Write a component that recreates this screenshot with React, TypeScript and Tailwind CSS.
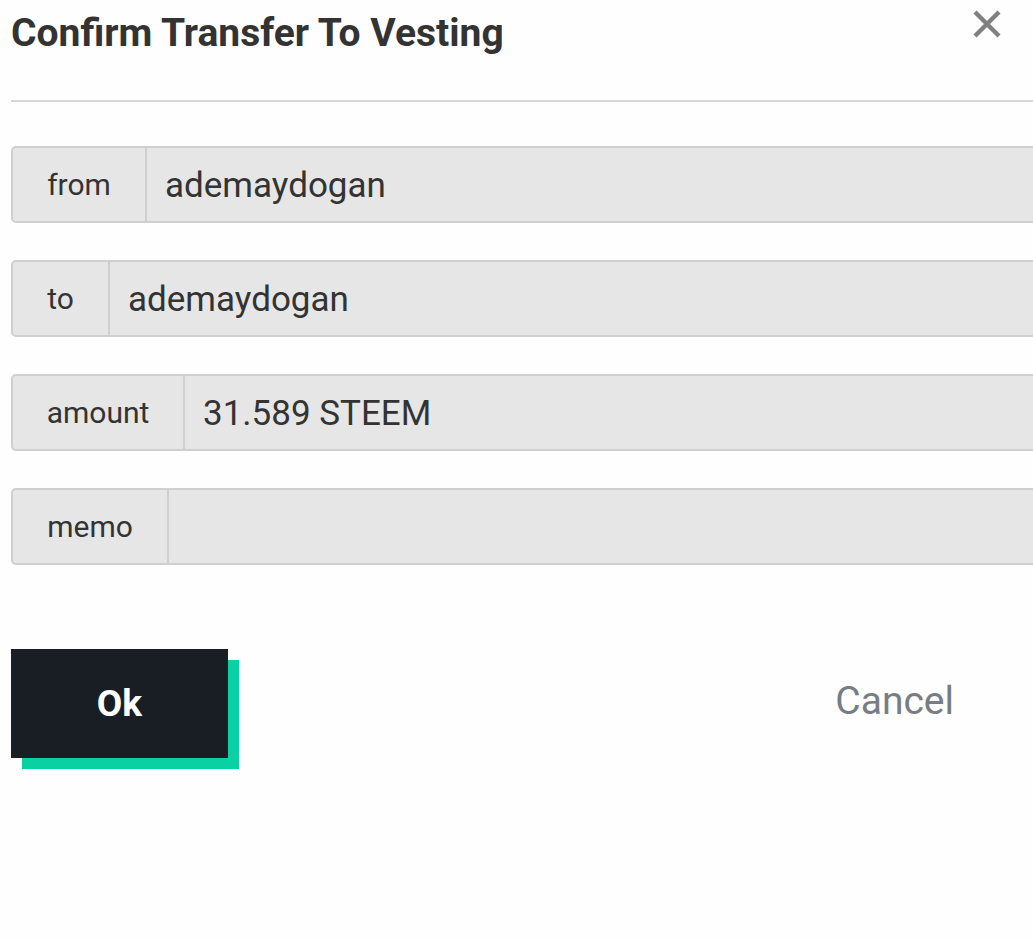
import React from 'react';

const rows = [
  { label: 'from', value: 'ademaydogan', labelW: 'w-[136px]' },
  { label: 'to', value: 'ademaydogan', labelW: 'w-[99px]' },
  { label: 'amount', value: '31.589 STEEM', labelW: 'w-[174px]' },
  { label: 'memo', value: '', labelW: 'w-[158px]' },
];

function CloseIcon() {
  return (
    <svg width="28" height="28" viewBox="0 0 28 28" className="text-[#808080]">
      <path d="M2 2 L26 26 M26 2 L2 26" stroke="currentColor" strokeWidth="4.5" strokeLinecap="butt" />
    </svg>
  );
}

export default function App() {
  return (
    <div
      className="w-[1033px] h-[939px] overflow-hidden bg-[#fefefe] text-[#333]"
      style={{ fontFamily: 'Roboto, "Liberation Sans", sans-serif' }}>
      <div className="flex items-start justify-between pl-[11px] pr-[32px] pt-[10px]">
        <h1 className="text-[39px] font-bold leading-[46px] text-[#333]">
          Confirm Transfer To Vesting
        </h1>
        <button>
          <CloseIcon />
        </button>
      </div>
      <div className="ml-[11px] mt-[44px] h-[2px] bg-[#d6d6d6]" />

      <div className="pl-[11px] pt-[44px] flex flex-col gap-[37px]">
        {rows.map((r) =>
          <div key={r.label} className="flex h-[77px] w-[1040px]">
            <div
              className={`${r.labelW} shrink-0 flex items-center justify-center bg-[#e6e6e6] border-2 border-[#cfcfcf] rounded-l-[5px] text-[30px] text-[#333]`}>
              {r.label}
            </div>
            <div className="flex-1 flex items-center bg-[#e6e6e6] border-2 border-l-0 border-[#cfcfcf] pl-[18px] pt-[3px] text-[35px] text-[#333]">
              {r.value}
            </div>
          </div>
        )}
      </div>

      <div className="flex items-center justify-between pl-[11px] pr-[79px] mt-[84px]">
        <div className="relative w-[228px] h-[120px]">
          <div className="absolute left-[11px] top-[11px] w-[217px] h-[109px] bg-[#0ad1a4]" />
          <button className="absolute left-0 top-0 w-[217px] h-[109px] bg-[#181e24] text-white text-[37px] font-bold flex items-center justify-center">
            Ok
          </button>
        </div>
        <button className="text-[39px] text-[#777d83] -mt-[16px]">Cancel</button>
      </div>
    </div>
  );
}
